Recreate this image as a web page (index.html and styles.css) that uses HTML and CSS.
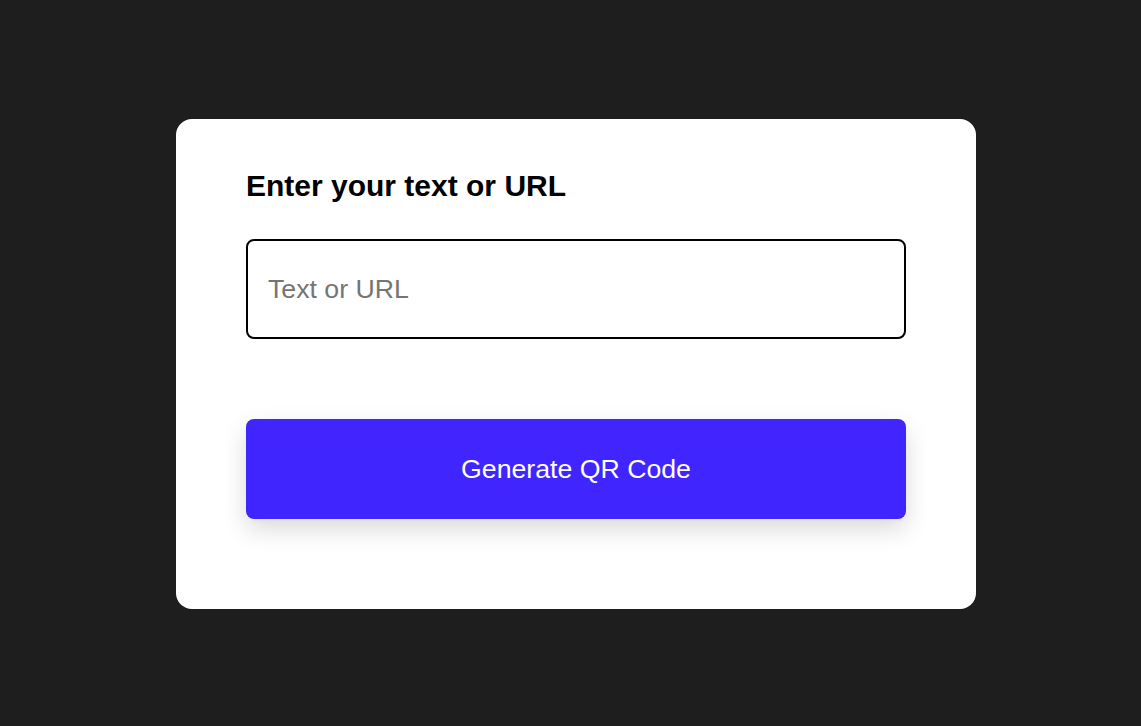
FILE: index.html
```html
<!DOCTYPE html>
<html lang="en">
<head>
<meta charset="utf-8">
<title>QR Code Generator</title>
<link rel="stylesheet" href="styles.css">
</head>
<body>
<main class="card">
  <h1 class="title">Enter your text or URL</h1>
  <input class="field" type="text" placeholder="Text or URL">
  <button class="btn" type="button">Generate QR Code</button>
</main>
</body>
</html>
```
FILE: styles.css
```css
* { box-sizing: border-box; }
html, body { margin: 0; height: 100%; }
body {
  background: #1e1e1e;
  font-family: "Liberation Sans", Arial, sans-serif;
  display: flex;
  justify-content: center;
  align-items: center;
  padding: 2px 0 0 11px;
}
.card {
  width: 800px;
  height: 490px;
  background: #fff;
  border-radius: 16px;
  padding: 50px 70px 90px;
  display: flex;
  flex-direction: column;
}
.title {
  margin: 0;
  font-size: 30px;
  font-weight: 700;
  line-height: 34.5px;
  color: #000;
}
.field {
  margin-top: 35.5px;
  height: 100px;
  width: 100%;
  border: 2px solid #000;
  border-radius: 8px;
  padding: 0 20px;
  font-family: "Liberation Sans", Arial, sans-serif;
  font-size: 26.7px;
  color: #000;
  outline: none;
}
.field::placeholder { color: #757575; }
.btn {
  margin-top: 80px;
  height: 100px;
  width: 100%;
  border: none;
  border-radius: 8px;
  background: #4125ff;
  color: #fff;
  font-family: "Liberation Sans", Arial, sans-serif;
  font-size: 26.7px;
  box-shadow: 0 10px 25px rgba(0, 0, 0, 0.15);
  cursor: pointer;
}
```
